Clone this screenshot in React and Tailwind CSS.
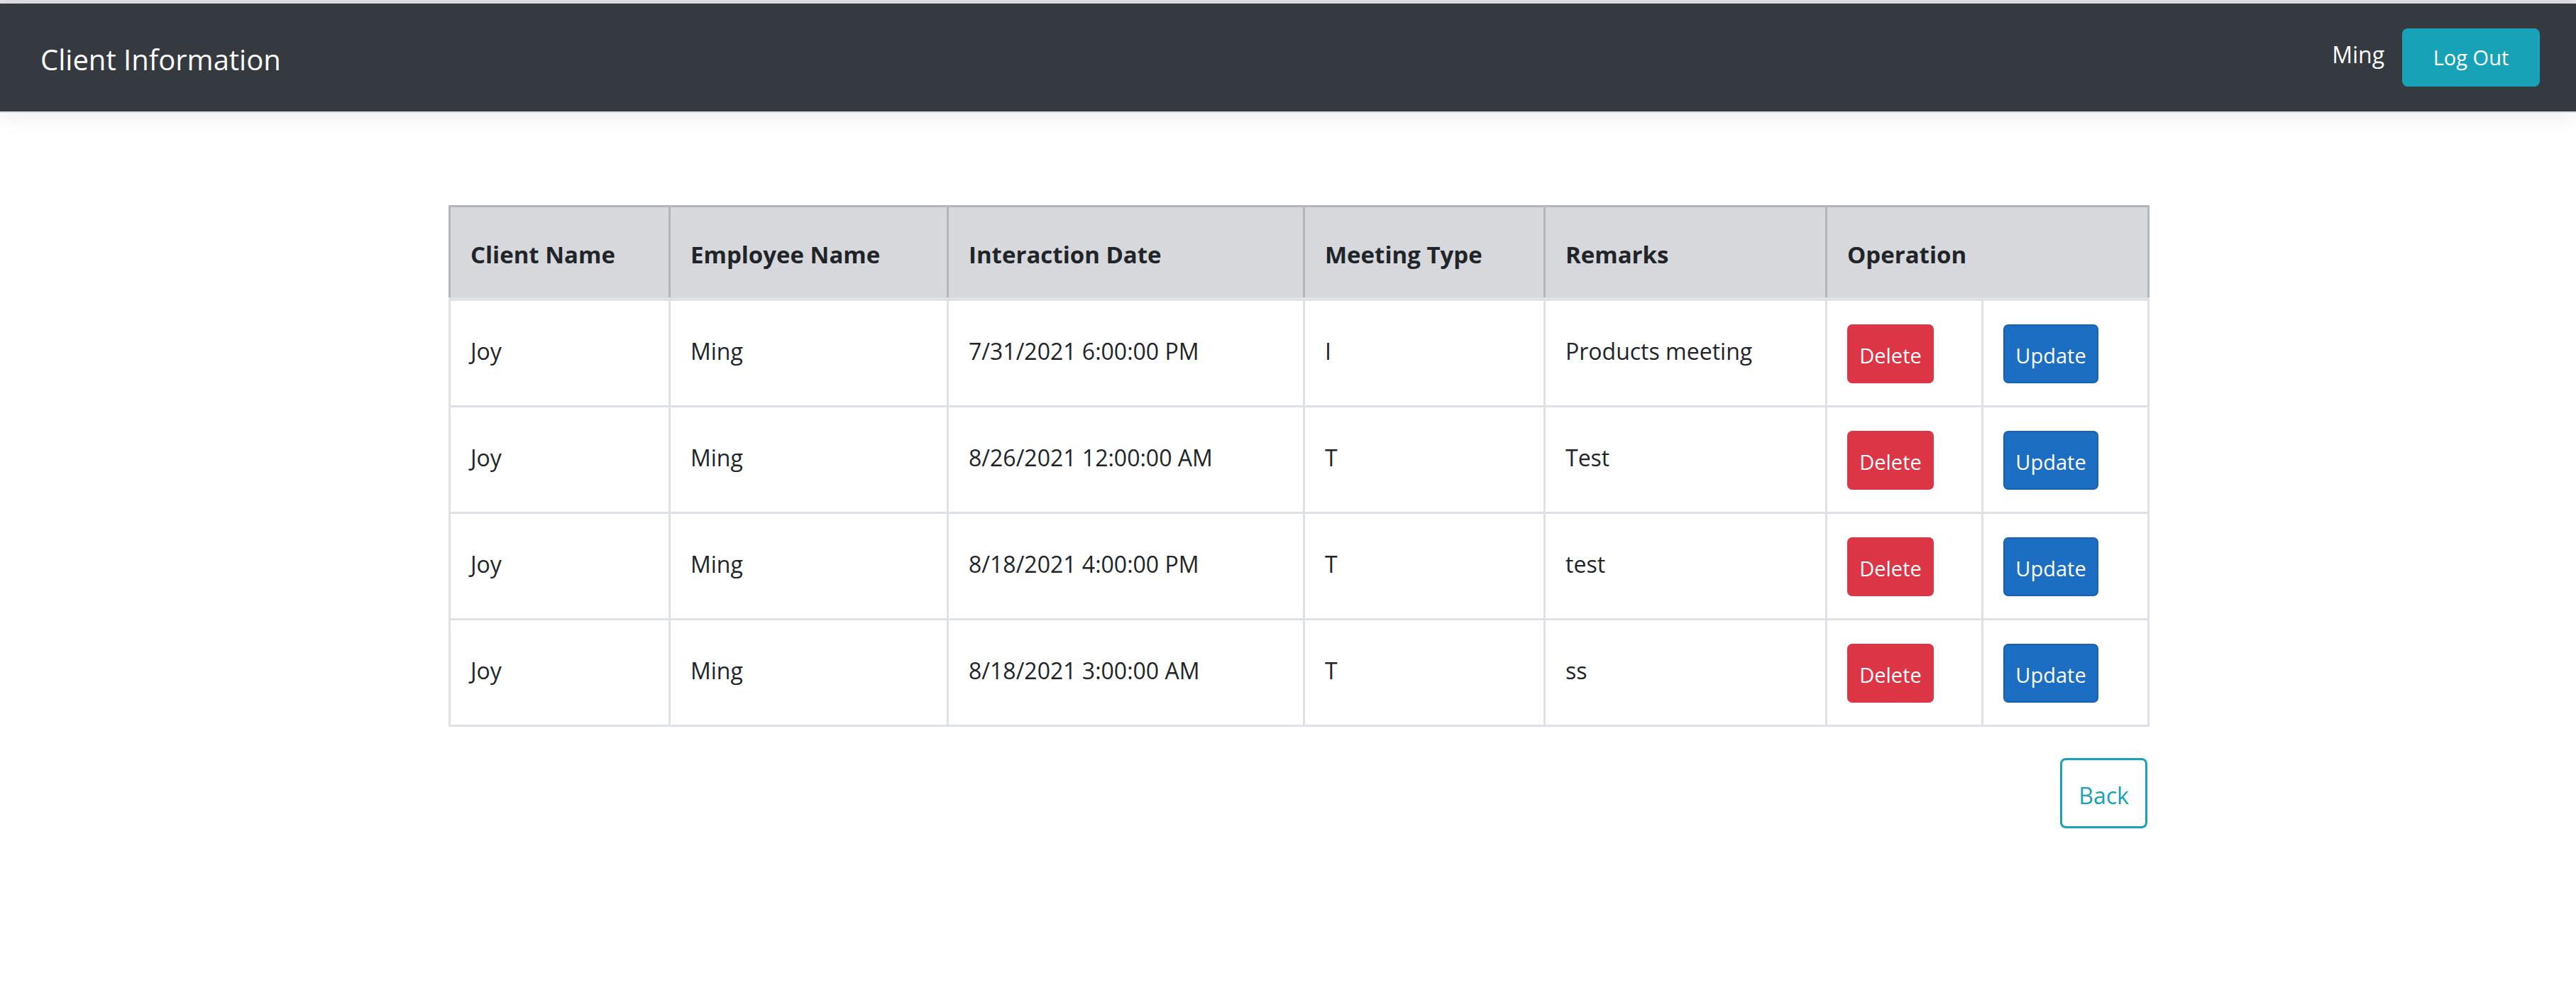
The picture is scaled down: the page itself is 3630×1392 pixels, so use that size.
import React from 'react'

const rows = [
  { client: 'Joy', employee: 'Ming', date: '7/31/2021 6:00:00 PM', type: 'I', remarks: 'Products meeting' },
  { client: 'Joy', employee: 'Ming', date: '8/26/2021 12:00:00 AM', type: 'T', remarks: 'Test' },
  { client: 'Joy', employee: 'Ming', date: '8/18/2021 4:00:00 PM', type: 'T', remarks: 'test' },
  { client: 'Joy', employee: 'Ming', date: '8/18/2021 3:00:00 AM', type: 'T', remarks: 'ss' },
]

const th = 'h-[131px] border-[3px] border-[#b3b7bb] border-b-[5px] border-b-[#dee2e6] bg-[#d6d8db] px-[28px] pb-[27px] text-left align-bottom font-bold text-[33px] leading-[66px]'
const td = 'border-[3px] border-[#dee2e6] px-[28px] pt-[33px] pb-[31px] align-top text-[32px] leading-[66px]'

export default function App() {
  return (
    <div className="min-h-[1392px] bg-white font-['Open_Sans',sans-serif] text-[#212529]">
      {/* Top bar */}
      <div className="h-[5px] bg-[#dcdde1]" />
      <nav className="flex h-[154px] items-center justify-between border-b-[2px] border-[#dee2e6] bg-[#343a40] pl-[57px] pr-[51px] shadow-[0_9px_28px_rgba(0,0,0,0.06)]">
        <span className="pt-[6px] text-[40px] text-white">Client Information</span>
        <div className="flex items-center gap-[25px]">
          <span className="pb-[8px] text-[32px] text-white">Ming</span>
          <button className="flex h-[82px] w-[194px] items-center justify-center rounded-[8px] bg-[#17a2b8] text-[29px] text-white">
            Log Out
          </button>
        </div>
      </nav>

      <main className="ml-[632px] w-[2394px] pt-[130px]">
        <table className="w-full table-fixed border-collapse">
          <colgroup>
            <col className="w-[310px]" />
            <col className="w-[392px]" />
            <col className="w-[502px]" />
            <col className="w-[339px]" />
            <col className="w-[397px]" />
            <col className="w-[220px]" />
            <col className="w-[234px]" />
          </colgroup>
          <thead>
            <tr>
              <th className={th}>Client Name</th>
              <th className={th}>Employee Name</th>
              <th className={th}>Interaction Date</th>
              <th className={th}>Meeting Type</th>
              <th className={th}>Remarks</th>
              <th className={th} colSpan={2}>Operation</th>
            </tr>
          </thead>
          <tbody>
            {rows.map((r, i) => (
              <tr key={i} className="h-[150px]">
                <td className={td}><span className="relative top-[5px]">{r.client}</span></td>
                <td className={td}><span className="relative top-[5px]">{r.employee}</span></td>
                <td className={td}><span className="relative top-[5px]">{r.date}</span></td>
                <td className={td}><span className="relative top-[5px]">{r.type}</span></td>
                <td className={td}><span className="relative top-[5px]">{r.remarks}</span></td>
                <td className={td}>
                  <button className="flex h-[83px] w-[122px] items-center justify-center rounded-[7px] bg-[#dc3545] pt-[4px] text-[29px] leading-none text-white">
                    Delete
                  </button>
                </td>
                <td className={td}>
                  <button className="flex h-[83px] w-[134px] items-center justify-center rounded-[7px] border-[2px] border-[#1861ac] bg-[#1b6ec2] pt-[4px] text-[29px] leading-none text-white">
                    Update
                  </button>
                </td>
              </tr>
            ))}
          </tbody>
        </table>

        <div className="flex justify-end pt-[44px]">
          <button className="flex h-[99px] w-[123px] items-center justify-center rounded-[8px] border-[3px] border-[#17a2b8] bg-white pt-[6px] text-[32px] text-[#17a2b8]">
            Back
          </button>
        </div>
      </main>
    </div>
  )
}
